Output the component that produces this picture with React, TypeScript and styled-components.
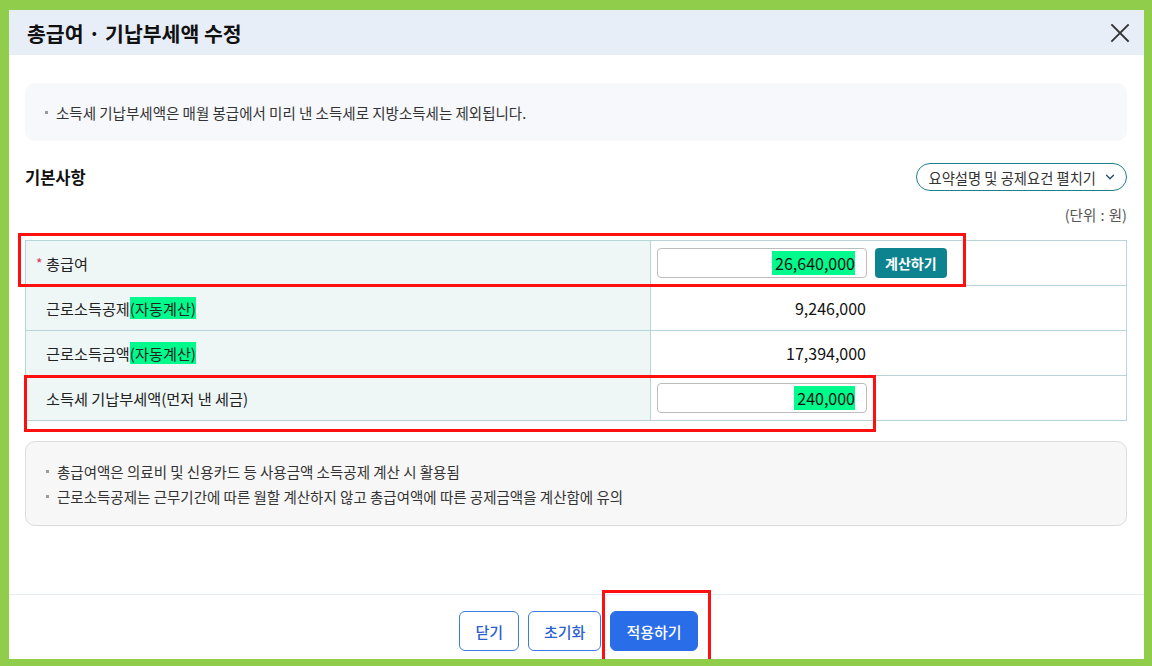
import styled, { createGlobalStyle } from "styled-components";
import { ChevronDown } from "lucide-react";

const GlobalStyle = createGlobalStyle`
  html, body {
    margin: 0;
    padding: 0;
  }

  body {
    background: #8fcd4b;
    font-family: "Noto Sans CJK KR", "Noto Sans", sans-serif;
    color: #222;
  }
`;

type Row = {
  label: string;
  auto?: boolean;
  required?: boolean;
  value: string;
  editable?: boolean;
  calc?: boolean;
};

const rows: Row[] = [
  { label: "총급여", required: true, value: "26,640,000", editable: true, calc: true },
  { label: "근로소득공제", auto: true, value: "9,246,000" },
  { label: "근로소득금액", auto: true, value: "17,394,000" },
  { label: "소득세 기납부세액(먼저 낸 세금)", value: "240,000", editable: true },
];

const notes = [
  "총급여액은 의료비 및 신용카드 등 사용금액 소득공제 계산 시 활용됨",
  "근로소득공제는 근무기간에 따른 월할 계산하지 않고 총급여액에 따른 공제금액을 계산함에 유의",
];

function CloseIcon() {
  return (
    <svg width="20" height="20" viewBox="0 0 20 20" fill="none">
      <path d="M2 2L18 18M18 2L2 18" stroke="#333" strokeWidth="1.8" strokeLinecap="square" />
    </svg>
  );
}

export default function App() {
  return (
    <Page>
      <GlobalStyle />
      <Modal>
        <Header>
          <Title>총급여 · 기납부세액 수정</Title>
          <CloseButton aria-label="닫기">
            <CloseIcon />
          </CloseButton>
        </Header>

        <Body>
          <Notice>
            <Bullet>소득세 기납부세액은 매월 봉급에서 미리 낸 소득세로 지방소득세는 제외됩니다.</Bullet>
          </Notice>

          <SectionHead>
            <SectionTitle>기본사항</SectionTitle>
            <ToggleButton>
              요약설명 및 공제요건 펼치기
              <ChevronDown size={14} strokeWidth={2.4} color="#2b4e6a" />
            </ToggleButton>
          </SectionHead>

          <Unit>(단위 : 원)</Unit>

          <TableWrap>
            {rows.map((row) => (
              <TableRow key={row.label}>
                <LabelCell $required={row.required}>
                  {row.required && <Star>*</Star>}
                  {row.label}
                  {row.auto && <Mark>(자동계산)</Mark>}
                </LabelCell>
                <ValueCell>
                  {row.editable ? (
                    <AmountField>
                      <Mark $pad>{row.value}</Mark>
                    </AmountField>
                  ) : (
                    <Amount>{row.value}</Amount>
                  )}
                  {row.calc && <CalcButton>계산하기</CalcButton>}
                </ValueCell>
              </TableRow>
            ))}
            <Annotation $top={-8} $left={-8} $width={948} $height={54} />
            <Annotation $top={134} $left={-2} $width={852} $height={57} />
          </TableWrap>

          <Notes>
            {notes.map((note) => (
              <Bullet key={note}>{note}</Bullet>
            ))}
          </Notes>
        </Body>

        <Footer>
          <Button>닫기</Button>
          <Button>초기화</Button>
          <Highlighted>
            <Button $primary>적용하기</Button>
            <Annotation $top={-21} $left={-8} $width={109} $height={69} $open />
          </Highlighted>
        </Footer>
      </Modal>
    </Page>
  );
}

const Page = styled.div`
  height: 666px;
  box-sizing: border-box;
  padding: 10px 8px 7px 9px;
`;

const Modal = styled.div`
  display: flex;
  flex-direction: column;

  height: 649px;
  background: #fff;
`;

const Header = styled.div`
  display: flex;
  align-items: center;
  justify-content: space-between;

  height: 45px;
  padding: 0 10px 0 18px;
  flex-shrink: 0;

  background: #e8eef8;
`;

const Title = styled.h1`
  margin: 0;
  font-size: 20.5px;
  font-weight: 700;
  color: #111;
`;

const CloseButton = styled.button`
  display: flex;
  align-items: center;
  justify-content: center;

  width: 28px;
  height: 28px;
  padding: 0;

  border: none;
  background: none;
  cursor: pointer;
`;

const Body = styled.div`
  flex: 1;
  padding: 28px 17px 0 16px;
`;

const Notice = styled.div`
  display: flex;
  align-items: center;

  height: 58px;
  padding: 0 20px;
  box-sizing: border-box;

  background: #f6f8fc;
  border-radius: 10px;
`;

const Bullet = styled.p`
  position: relative;
  margin: 0;
  padding-left: 11px;

  font-size: 14.5px;
  line-height: 17px;
  color: #333;

  &::before {
    content: "";
    position: absolute;
    left: 0;
    top: 7px;

    width: 3px;
    height: 3px;
    background: #9a9a9a;
  }
`;

const SectionHead = styled.div`
  display: flex;
  align-items: center;
  justify-content: space-between;

  margin-top: 22px;
  height: 28px;
`;

const SectionTitle = styled.h2`
  margin: 0;
  font-size: 16.5px;
  font-weight: 700;
  color: #111;
`;

const ToggleButton = styled.button`
  display: flex;
  align-items: center;
  gap: 7px;

  height: 28px;
  padding: 0 9px 0 12px;
  box-sizing: border-box;

  border: 1px solid #1f808c;
  border-radius: 14px;
  background: #fff;

  font-family: inherit;
  font-size: 14.3px;
  color: #333;
  cursor: pointer;
`;

const Unit = styled.div`
  margin-top: 15px;

  text-align: right;
  font-size: 14.5px;
  line-height: 17px;
  color: #555;
  word-spacing: 1px;
`;

const TableWrap = styled.div`
  position: relative;
  margin-top: 17px;

  border: 1px solid #b7d5d8;
  border-bottom: none;
`;

const TableRow = styled.div`
  display: grid;
  grid-template-columns: 625px 1fr;

  height: 45px;
  box-sizing: border-box;
  border-bottom: 1px solid #b7d5d8;
`;

const LabelCell = styled.div<{ $required?: boolean }>`
  display: flex;
  align-items: center;

  padding-left: ${(p) => (p.$required ? "10px" : "20px")};
  background: #eef6f6;
  border-right: 1px solid #b7d5d8;

  font-size: 15.2px;
  color: #222;
`;

const Star = styled.span`
  width: 10px;
  color: #e2334e;
  font-size: 14px;
`;

const Mark = styled.span<{ $pad?: boolean }>`
  background: #00fa8c;
  padding-left: ${(p) => (p.$pad ? "3px" : "0")};
`;

const ValueCell = styled.div`
  display: flex;
  align-items: center;
  gap: 8px;

  padding-left: 6px;
`;

const AmountField = styled.div`
  display: flex;
  align-items: center;
  justify-content: flex-end;

  width: 210px;
  height: 30px;
  padding-right: 11px;
  box-sizing: border-box;

  border: 1px solid #bcbcbc;
  border-radius: 4px;

  font-size: 16px;
  color: #111;
`;

const Amount = styled.div`
  width: 210px;
  padding-right: 1px;
  box-sizing: border-box;

  text-align: right;
  font-size: 16px;
  color: #111;
`;

const CalcButton = styled.button`
  height: 30px;
  padding: 0 10px;

  border: none;
  border-radius: 4px;
  background: #0e8390;

  font-family: inherit;
  font-size: 14px;
  font-weight: 700;
  color: #fff;
  cursor: pointer;
`;

const Annotation = styled.div<{
  $top: number;
  $left: number;
  $width: number;
  $height: number;
  $open?: boolean;
}>`
  position: absolute;
  top: ${(p) => p.$top}px;
  left: ${(p) => p.$left}px;

  width: ${(p) => p.$width}px;
  height: ${(p) => p.$height}px;
  box-sizing: border-box;

  border: 3px solid #ff1010;
  ${(p) => (p.$open ? "border-bottom: none;" : "")}
  pointer-events: none;
`;

const Notes = styled.div`
  display: flex;
  flex-direction: column;
  justify-content: center;
  gap: 8px;

  margin-top: 20px;
  height: 85px;
  padding: 0 20px;
  box-sizing: border-box;

  background: #f7f7f7;
  border: 1px solid #dcdcdc;
  border-radius: 10px;
`;

const Footer = styled.div`
  display: flex;
  justify-content: center;
  gap: 9px;

  padding: 16px 0 8px 4px;
  border-top: 1px solid #e6edf5;
`;

const Highlighted = styled.div`
  position: relative;
`;

const Button = styled.button<{ $primary?: boolean }>`
  height: 40px;
  padding: 0 15px;

  border: 1px solid ${(p) => (p.$primary ? "#2a6de8" : "#3a7be6")};
  border-radius: 6px;
  background: ${(p) => (p.$primary ? "#2a6de8" : "#fff")};

  font-family: inherit;
  font-size: 15px;
  font-weight: 500;
  color: ${(p) => (p.$primary ? "#fff" : "#2c5fd0")};
  cursor: pointer;
`;
